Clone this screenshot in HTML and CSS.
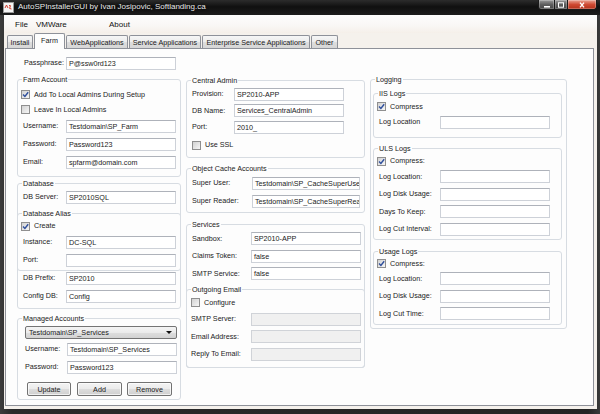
FILE: index.html
```html
<!DOCTYPE html>
<html>
<head>
<meta charset="utf-8">
<title>AutoSPInstallerGUI</title>
<link rel="stylesheet" href="styles.css">
</head>
<body>
<div class="window">
  <div class="titlebar">
    <svg class="app-icon" viewBox="0 0 11 11"><rect x="0.5" y="0.5" width="10" height="10" fill="#f4f4f4" stroke="#9a9a9a"/><path d="M2 6 L3.5 3 L5 6 M6 3.5 Q8.5 3 7 5 Q5.5 7 8.5 7" stroke="#d23a2a" stroke-width="1" fill="none"/></svg>
    <span class="title">AutoSPInstallerGUI by Ivan Josipovic, Softlanding.ca</span>
    <div class="controls">
      <div class="ctl ctl-min"><svg viewBox="0 0 8 6" class="ctl-glyph"><rect x="1" y="4" width="6" height="1.6" fill="#fff"/></svg></div>
      <div class="ctl ctl-max"><svg viewBox="0 0 8 6" class="ctl-glyph"><rect x="1.5" y="0.8" width="5" height="4.4" fill="none" stroke="#fff" stroke-width="1"/></svg></div>
      <div class="ctl ctl-close"><svg viewBox="0 0 8 6" class="ctl-glyph"><path d="M2 0.6 L6 5.4 M6 0.6 L2 5.4" stroke="#fff" stroke-width="1.4"/></svg></div>
    </div>
  </div>
  <div class="client">
    <div class="menubar">
      <span class="m-file">File</span>
      <span class="m-vmware">VMWare</span>
      <span>About</span>
    </div>
    <div class="tabstrip">
      <div class="tab t-install">Install</div>
      <div class="tab t-farm active">Farm</div>
      <div class="tab t-web">WebApplications</div>
      <div class="tab t-svc">Service Applications</div>
      <div class="tab t-ent">Enterprise Service Applications</div>
      <div class="tab t-other">Other</div>
    </div>
    <div class="panel">
      <!-- LEFT COLUMN -->
      <div class="col col-left">
        <div class="row pass"><span class="lbl">Passphrase:</span><div class="tb">P@ssw0rd123</div></div>

        <div class="gb farm">
          <div class="gt">Farm Account</div>
          <div class="gbody">
            <div class="row h15 cbrow"><span class="cb on"><svg viewBox="0 0 7 7"><path d="M1 3.6 L2.9 5.5 L6.2 1.2" /></svg></span><span class="lbl">Add To Local Admins During Setup</span></div>
            <div class="row h15 cbrow"><span class="cb"></span><span class="lbl">Leave In Local Admins</span></div>
            <div class="row h18"><span class="lbl">Username:</span><div class="tb">Testdomain\SP_Farm</div></div>
            <div class="row h18"><span class="lbl">Password:</span><div class="tb">Password123</div></div>
            <div class="row h18"><span class="lbl">Email:</span><div class="tb">spfarm@domain.com</div></div>
          </div>
        </div>

        <div class="gb db">
          <div class="gt">Database</div>
          <div class="gbody">
            <div class="row h16"><span class="lbl">DB Server:</span><div class="tb">SP2010SQL</div></div>
          </div>
          <div class="gb alias">
            <div class="gt">Database Alias</div>
            <div class="gbody">
              <div class="row h14 cbrow"><span class="cb on"><svg viewBox="0 0 7 7"><path d="M1 3.6 L2.9 5.5 L6.2 1.2" /></svg></span><span class="lbl">Create</span></div>
              <div class="row h18"><span class="lbl">Instance:</span><div class="tb">DC-SQL</div></div>
              <div class="row h18"><span class="lbl">Port:</span><div class="tb"></div></div>
            </div>
          </div>
          <div class="gbody db-bottom">
            <div class="row h18"><span class="lbl">DB Prefix:</span><div class="tb">SP2010</div></div>
            <div class="row h18"><span class="lbl">Config DB:</span><div class="tb">Config</div></div>
          </div>
        </div>

        <div class="gb managed">
          <div class="gt">Managed Accounts</div>
          <div class="gbody">
            <div class="row h16"><div class="combo"><span>Testdomain\SP_Services</span><span class="arrow"></span></div></div>
            <div class="row h18"><span class="lbl">Username:</span><div class="tb">Testdomain\SP_Services</div></div>
            <div class="row h18"><span class="lbl">Password:</span><div class="tb">Password123</div></div>
            <div class="row h16 btnrow">
              <div class="btn b-update">Update</div>
              <div class="btn b-add">Add</div>
              <div class="btn b-remove">Remove</div>
            </div>
          </div>
        </div>
      </div>

      <!-- MIDDLE COLUMN -->
      <div class="col col-mid">
        <div class="gb central">
          <div class="gt">Central Admin</div>
          <div class="gbody">
            <div class="row h165"><span class="lbl">Provision:</span><div class="tb">SP2010-APP</div></div>
            <div class="row h165"><span class="lbl">DB Name:</span><div class="tb">Services_CentralAdmin</div></div>
            <div class="row h165"><span class="lbl">Port:</span><div class="tb">2010_</div></div>
            <div class="row h195"><span class="cb"></span><span class="lbl">Use SSL</span></div>
          </div>
        </div>

        <div class="gb cache">
          <div class="gt">Object Cache Accounts</div>
          <div class="gbody">
            <div class="row h18"><span class="lbl">Super User:</span><div class="tb">Testdomain\SP_CacheSuperUser</div></div>
            <div class="row h18"><span class="lbl">Super Reader:</span><div class="tb">Testdomain\SP_CacheSuperReader</div></div>
          </div>
        </div>

        <div class="gb services">
          <div class="gt">Services</div>
          <div class="gbody">
            <div class="row h175"><span class="lbl">Sandbox:</span><div class="tb">SP2010-APP</div></div>
            <div class="row h175"><span class="lbl">Claims Token:</span><div class="tb">false</div></div>
            <div class="row h175"><span class="lbl">SMTP Service:</span><div class="tb">false</div></div>
          </div>
          <div class="gb outgoing">
            <div class="gt">Outgoing Email</div>
            <div class="gbody">
              <div class="row h16"><span class="cb"></span><span class="lbl">Configure</span></div>
              <div class="row h175"><span class="lbl">SMTP Server:</span><div class="tb dis"></div></div>
              <div class="row h175"><span class="lbl">Email Address:</span><div class="tb dis"></div></div>
              <div class="row h175"><span class="lbl">Reply To Email:</span><div class="tb dis"></div></div>
            </div>
          </div>
        </div>
      </div>

      <!-- RIGHT COLUMN -->
      <div class="col col-right">
        <div class="gb logging">
          <div class="gt">Logging</div>
          <div class="gbody logging-body">
            <div class="gb iis">
              <div class="gt">IIS Logs</div>
              <div class="gbody">
                <div class="row h15 cbrow"><span class="cb on"><svg viewBox="0 0 7 7"><path d="M1 3.6 L2.9 5.5 L6.2 1.2" /></svg></span><span class="lbl">Compress</span></div>
                <div class="row h16"><span class="lbl">Log Location</span><div class="tb"></div></div>
              </div>
            </div>
            <div class="gb uls">
              <div class="gt">ULS Logs</div>
              <div class="gbody">
                <div class="row h14 cbrow"><span class="cb on"><svg viewBox="0 0 7 7"><path d="M1 3.6 L2.9 5.5 L6.2 1.2" /></svg></span><span class="lbl">Compress:</span></div>
                <div class="row h175"><span class="lbl">Log Location:</span><div class="tb"></div></div>
                <div class="row h175"><span class="lbl">Log Disk Usage:</span><div class="tb"></div></div>
                <div class="row h175"><span class="lbl">Days To Keep:</span><div class="tb"></div></div>
                <div class="row h175"><span class="lbl">Log Cut Interval:</span><div class="tb"></div></div>
              </div>
            </div>
            <div class="gb usage">
              <div class="gt">Usage Logs</div>
              <div class="gbody">
                <div class="row h13 cbrow"><span class="cb on"><svg viewBox="0 0 7 7"><path d="M1 3.6 L2.9 5.5 L6.2 1.2" /></svg></span><span class="lbl">Compress:</span></div>
                <div class="row h175"><span class="lbl">Log Location:</span><div class="tb"></div></div>
                <div class="row h175"><span class="lbl">Log Disk Usage:</span><div class="tb"></div></div>
                <div class="row h175"><span class="lbl">Log Cut Time:</span><div class="tb"></div></div>
              </div>
            </div>
          </div>
        </div>
      </div>
    </div>
  </div>
</div>
</body>
</html>
```

FILE: styles.css
```css
* { box-sizing: border-box; }

body {
  margin: 0;
  font-family: "Liberation Sans", Arial, sans-serif;
  font-size: 7.2px;
  color: #1b1b1b;
  background: #2e2e2e;
}

.window {
  width: 600px;
  height: 414px;
  background: linear-gradient(90deg, #3c3c3c, #2a2a2a 2%, #242424 98%, #3a3a3a);
  display: flex;
  flex-direction: column;
  overflow: hidden;
}

/* Title bar */
.titlebar {
  height: 15px;
  flex: none;
  display: flex;
  align-items: flex-start;
  background: linear-gradient(#2c2c2c, #101010 45%, #1c1c1c);
}
.app-icon { width: 11px; height: 11px; margin: 2px 0 0 3px; flex: none; }
.title {
  margin-left: 4px;
  font-size: 8px;
  line-height: 14px;
  color: #e8e8e8;
  text-shadow: 0 0 3px #000;
  white-space: nowrap;
}
.controls { margin-left: auto; margin-right: 3px; display: flex; height: 10px; }
.ctl {
  height: 10px;
  border: 1px solid #1a1a1a;
  border-top: none;
  display: flex;
  align-items: center;
  justify-content: center;
  box-shadow: inset 0 0 0 1px rgba(255,255,255,0.25);
}
.ctl-min { width: 17px; border-radius: 0 0 0 3px; background: linear-gradient(#9a9a9a, #5e5e5e 50%, #444); }
.ctl-max { width: 13px; border-left: none; background: linear-gradient(#9a9a9a, #5e5e5e 50%, #444); }
.ctl-close { width: 29px; border-left: none; border-radius: 0 0 3px 0; background: linear-gradient(#eaa595, #cf4a33 50%, #b2301a); }
.ctl-glyph { width: 8px; height: 6px; }

/* Client area */
.client {
  flex: 1;
  margin: 0 3px 5px 4px;
  background: #f5f1ec;
  display: flex;
  flex-direction: column;
}
.menubar {
  height: 18px;
  flex: none;
  display: flex;
  align-items: center;
  padding: 1px 0 0 11px;
  font-size: 8px;
  color: #111;
  background: linear-gradient(#fdfdfd, #f9f7f5 60%, #f5efe9);
}
.m-file { width: 21px; }
.m-vmware { width: 73px; }

.tabstrip {
  height: 15px;
  flex: none;
  display: flex;
  align-items: flex-end;
  gap: 1px;
  padding-left: 3px;
}
.tab {
  height: 13px;
  border: 1px solid #8e9199;
  border-bottom: none;
  border-radius: 2px 2px 0 0;
  background: linear-gradient(#f6f6f6, #ececec 50%, #dedede 51%, #d6d6d6);
  display: flex;
  align-items: center;
  justify-content: center;
  padding-top: 1px;
  white-space: nowrap;
  line-height: 9px;
}
.tab.active {
  height: 16px;
  margin-bottom: -1px;
  background: #fdfdfd;
  position: relative;
  z-index: 1;
  padding: 0 0 2px 0;
}
.t-install { width: 26px; }
.t-farm { width: 31px; }
.t-web { width: 62px; }
.t-svc { width: 72px; }
.t-ent { width: 108px; }
.t-other { width: 27px; }

.panel {
  flex: 1;
  margin: 0 3px 3px 1px;
  border: 1px solid #8e9199;
  background: #fdfdfd;
  display: flex;
  align-items: flex-start;
  padding-left: 11px;
}
.col { flex: none; }
.col-left { width: 164px; padding-top: 7px; }
.col-mid { width: 179px; margin-left: 5px; padding-top: 31px; }
.col-right { width: 197px; margin-left: 5px; padding-top: 30px; }

/* Group boxes: the box top is the border line, the caption straddles it */
.gb {
  border: 1px solid #d7dce2;
  border-radius: 3px;
}
.gt {
  width: fit-content;
  height: 11px;
  margin: -6px 0 0 4px;
  padding: 0 1px;
  line-height: 11px;
  background: #fdfdfd;
  white-space: nowrap;
}

/* Rows */
.row { display: flex; align-items: center; }
.h13 { height: 13px; }
.h14 { height: 14px; }
.h15 { height: 15px; }
.h16 { height: 16px; }
.h165 { height: 16.5px; }
.h175 { height: 17.5px; }
.h18 { height: 18px; }
.h195 { height: 19.5px; }
.lbl { flex: none; white-space: nowrap; line-height: 10px; }

.tb {
  flex: none;
  width: 110px;
  height: 13px;
  border: 1px solid #cdd1d8;
  border-top-color: #aeb2ba;
  background: #fff;
  padding-left: 2px;
  line-height: 11px;
  white-space: nowrap;
  overflow: hidden;
}
.tb.dis { background: #f0f0f0; border-color: #d0d3d8; }

.cb {
  flex: none;
  width: 9px;
  height: 9px;
  margin-right: 4px;
  border: 1px solid #8f8f8f;
  background: linear-gradient(135deg, #d2d2d2, #f6f6f6);
  display: flex;
}
.cb svg { width: 7px; height: 7px; }
.cb path { stroke: #2f4f9c; stroke-width: 1.4; fill: none; }
.cbrow .cb { margin-left: -2px; }

/* Passphrase */
.pass { height: 14px; padding-left: 7px; }
.pass .lbl { width: 42px; }

/* Farm account */
.farm { margin-top: 9px; }
.farm .gbody { padding: 2px 4px 5px 5px; }
.farm .lbl { width: 43px; }

/* Database */
.db { margin-top: 6px; }
.db .gbody { padding: 0 4px 0 5px; }
.db .lbl { width: 43px; }
.db .db-bottom { padding-bottom: 3px; }
.alias { margin: 8px -1px -2px; }
.alias .gbody { padding: 0 4px 1px 5px; }

/* Managed accounts */
.managed { margin-top: 9px; }
.managed .gbody { padding: 0 3px 2px 7px; }
.managed .lbl { width: 42px; }
.combo {
  width: 152px;
  height: 13px;
  border: 1px solid #747474;
  border-radius: 2px;
  background: linear-gradient(#f4f4f4, #ebebeb 50%, #dedede 51%, #d2d2d2);
  display: flex;
  align-items: center;
  justify-content: space-between;
  padding: 0 4px 0 3px;
  white-space: nowrap;
}
.arrow {
  width: 0;
  height: 0;
  border-left: 3px solid transparent;
  border-right: 3px solid transparent;
  border-top: 3px solid #111;
}
.btnrow { margin-top: 5px; padding-left: 2px; }
.btn {
  height: 14px;
  border: 1px solid #727272;
  border-radius: 2px;
  background: linear-gradient(#f3f3f3, #ebebeb 50%, #dddddd 51%, #cfcfcf);
  display: flex;
  align-items: center;
  justify-content: center;
  box-shadow: inset 0 0 0 1px rgba(255,255,255,0.7);
}
.b-update { width: 44px; }
.b-add { width: 45px; margin-left: 6px; }
.b-remove { width: 45px; margin-left: 5px; }

/* Middle column groups */
.central .gbody { padding: 0 3px 2px 5px; }
.central .lbl { width: 42px; }
.cache { margin-top: 10px; }
.cache .gbody { padding: 0 3px 2px 5px; }
.cache .lbl { width: 60px; }
.cache .tb { width: 108px; }
.services { margin-top: 11px; }
.services .gbody { padding: 0 3px 0 5px; }
.services .lbl { width: 59px; }
.outgoing { margin: 6px -1px -1px; }
.outgoing .gbody { padding: 0 3px 4px 4px; }
.outgoing .lbl { width: 60px; }

/* Right column */
.logging-body { padding: 8px 4px 3px 2px; }
.iis .gbody { padding: 0 4px 7px 5px; }
.uls { margin-top: 10px; }
.uls .gbody { padding: 0 4px 1px 5px; }
.usage { margin-top: 11px; }
.usage .gbody { padding: 0 4px 1px 5px; }
.logging .lbl { width: 61px; }
.logging .cbrow .lbl { width: auto; }
```
